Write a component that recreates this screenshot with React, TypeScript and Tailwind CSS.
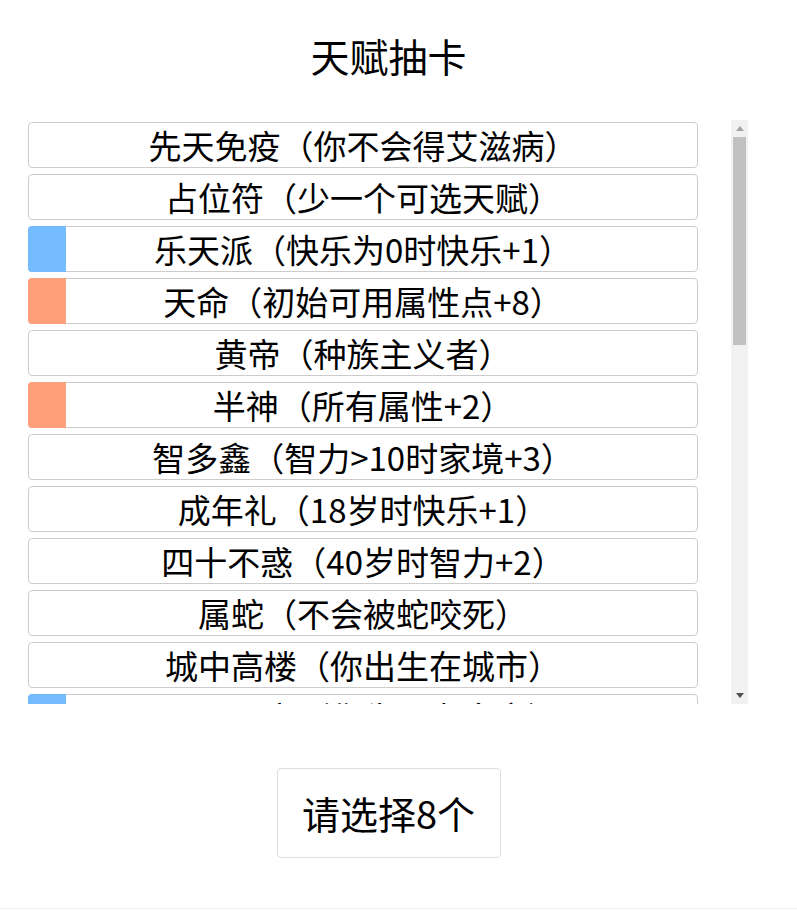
import React from 'react';

type Talent = { name: string; desc: string; tone?: 'blue' | 'orange' };

const talents: Talent[] = [
  { name: '先天免疫', desc: '你不会得艾滋病' },
  { name: '占位符', desc: '少一个可选天赋' },
  { name: '乐天派', desc: '快乐为0时快乐+1', tone: 'blue' },
  { name: '天命', desc: '初始可用属性点+8', tone: 'orange' },
  { name: '黄帝', desc: '种族主义者' },
  { name: '半神', desc: '所有属性+2', tone: 'orange' },
  { name: '智多鑫', desc: '智力>10时家境+3' },
  { name: '成年礼', desc: '18岁时快乐+1' },
  { name: '四十不惑', desc: '40岁时智力+2' },
  { name: '属蛇', desc: '不会被蛇咬死' },
  { name: '城中高楼', desc: '你出生在城市' },
  { name: '王墨下宫', desc: '你生而为皇室', tone: 'blue' },
];

const font = { fontFamily: '"Noto Sans CJK SC", "Liberation Sans", sans-serif' };

const App: React.FC = () => {
  return (
    <div className="w-[797px] h-[909px] bg-white text-black border-b border-[#eeeeee]" style={font}>
      <div className="w-[777px] flex flex-col items-center">
        <h1 className="mt-[31px] h-[48px] leading-[48px] text-[39px] font-normal">天赋抽卡</h1>

        {/* talent list */}
        <div className="mt-[41px] self-start ml-[28px] flex gap-[33px] h-[584px] w-[720px]">
          <div className="w-[670px] h-full overflow-hidden pt-[2px] flex flex-col gap-[6px]">
            {talents.map((t, i) => (
              <div
                key={i}
                className="relative shrink-0 h-[46px] border border-[#cccccc] rounded-[4px] flex items-center justify-center text-[33px] leading-none"
              >
                {t.tone && (
                  <span
                    className={`absolute -left-px -top-px -bottom-px w-[38px] rounded-l-[4px] ${
                      t.tone === 'blue' ? 'bg-[#74bcff]' : 'bg-[#ffa07a]'
                    }`}
                  />
                )}
                <span className="relative whitespace-nowrap">{t.name}（{t.desc}）</span>
              </div>
            ))}
          </div>

          {/* scrollbar */}
          <div className="w-[17px] h-full bg-[#f1f1f1] flex flex-col">
            <div className="h-[17px] flex items-center justify-center">
              <svg width="8" height="5" viewBox="0 0 8 5"><path d="M0 5 L4 0 L8 5 Z" fill="#a3a3a3" /></svg>
            </div>
            <div className="mx-[2px] h-[208px] bg-[#c1c1c1]" />
            <div className="flex-1" />
            <div className="h-[17px] flex items-center justify-center">
              <svg width="8" height="5" viewBox="0 0 8 5"><path d="M0 0 L4 5 L8 0 Z" fill="#505050" /></svg>
            </div>
          </div>
        </div>

        <button className="mt-[64px] w-[224px] h-[90px] border border-[#dddddd] rounded-[4px] bg-white text-[38px] leading-none">
          请选择8个
        </button>
      </div>
    </div>
  );
};

export default App;
